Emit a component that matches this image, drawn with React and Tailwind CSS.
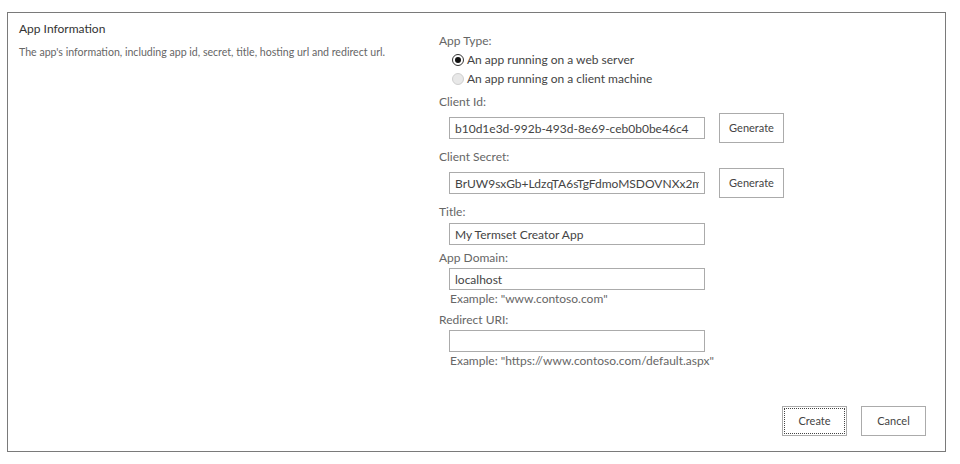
import React from "react";

const font = { fontFamily: 'Lato, "Open Sans", "Liberation Sans", sans-serif' };

const Label = ({ children, className = "" }) => (
  <div className={"h-[18px] text-[12px] leading-[18px] text-[#666] " + className}>
    {children}
  </div>
);

const TextBox = ({ value = "", className = "" }) => (
  <input
    readOnly
    value={value}
    className={
      "ml-[10px] h-[22px] w-[256px] border border-[#ababab] bg-white px-[5px] text-[12px] text-[#444] outline-none " +
      className
    }
  />
);

const Btn = ({ children, focused }) => (
  <button
    className={
      "h-[30px] w-[65px] border border-[#ababab] bg-white text-[11px] text-[#444] " +
      (focused ? "outline outline-1 outline-dotted outline-[#444] -outline-offset-[3px]" : "")
    }
  >
    {children}
  </button>
);

const Radio = ({ checked, disabled, children }) => (
  <label className="flex h-[19px] items-center pl-[13px] text-[12px] text-[#444]">
    <span
      className={
        "mr-[3px] flex h-[12px] w-[12px] items-center justify-center rounded-full border " +
        (disabled ? "border-[#cfcfcf] bg-[#e8e8e8]" : "border-[#333] bg-white")
      }
    >
      {checked && <span className="h-[6px] w-[6px] rounded-full bg-[#111]" />}
    </span>
    <span>{children}</span>
  </label>
);

export default function App() {
  return (
    <div className="h-[464px] w-[960px] bg-white pl-[7px] pt-[12px]" style={font}>
      <div className="flex h-[440px] w-[939px] flex-col border border-[#7a7a7a]">
        <div className="flex flex-1">
          {/* left: section description */}
          <div className="w-[431px] pl-[11px] pt-[7px]">
            <div className="text-[12px] leading-[18px] text-[#333]">App Information</div>
            <div className="mt-[7px] text-[10.6px] leading-[14px] text-[#666]">
              The app's information, including app id, secret, title, hosting url and redirect url.
            </div>
          </div>

          {/* right: fields */}
          <div className="flex flex-col pt-[19px]">
            <Label>App Type:</Label>
            <Radio checked>An app running on a web server</Radio>
            <Radio disabled>An app running on a client machine</Radio>

            <Label className="mt-[5px]">Client Id:</Label>
            <div className="mt-[2px] flex items-center gap-[14px]">
              <TextBox value="b10d1e3d-992b-493d-8e69-ceb0b0be46c4" />
              <Btn>Generate</Btn>
            </div>

            <Label className="mt-[5px]">Client Secret:</Label>
            <div className="mt-[2px] flex items-center gap-[14px]">
              <TextBox value="BrUW9sxGb+LdzqTA6sTgFdmoMSDOVNXx2mkQz3lPq8=" />
              <Btn>Generate</Btn>
            </div>

            <Label className="mt-[5px]">Title:</Label>
            <TextBox className="mt-[2px]" value="My Termset Creator App" />

            <Label className="mt-[4px]">App Domain:</Label>
            <TextBox className="mt-[1px]" value="localhost" />
            <div className="ml-[11px] h-[18px] text-[12px] leading-[18px] text-[#666]">
              Example: "www.contoso.com"
            </div>

            <Label className="mt-[3px]">Redirect URI:</Label>
            <TextBox className="mt-[1px]" />
            <div className="ml-[11px] h-[18px] text-[12px] leading-[18px] text-[#666]">
              Example: "https://www.contoso.com/default.aspx"
            </div>
          </div>
        </div>

        {/* bottom buttons */}
        <div className="flex justify-end gap-[14px] pb-[15px] pr-[19px]">
          <Btn focused>Create</Btn>
          <Btn>Cancel</Btn>
        </div>
      </div>
    </div>
  );
}
